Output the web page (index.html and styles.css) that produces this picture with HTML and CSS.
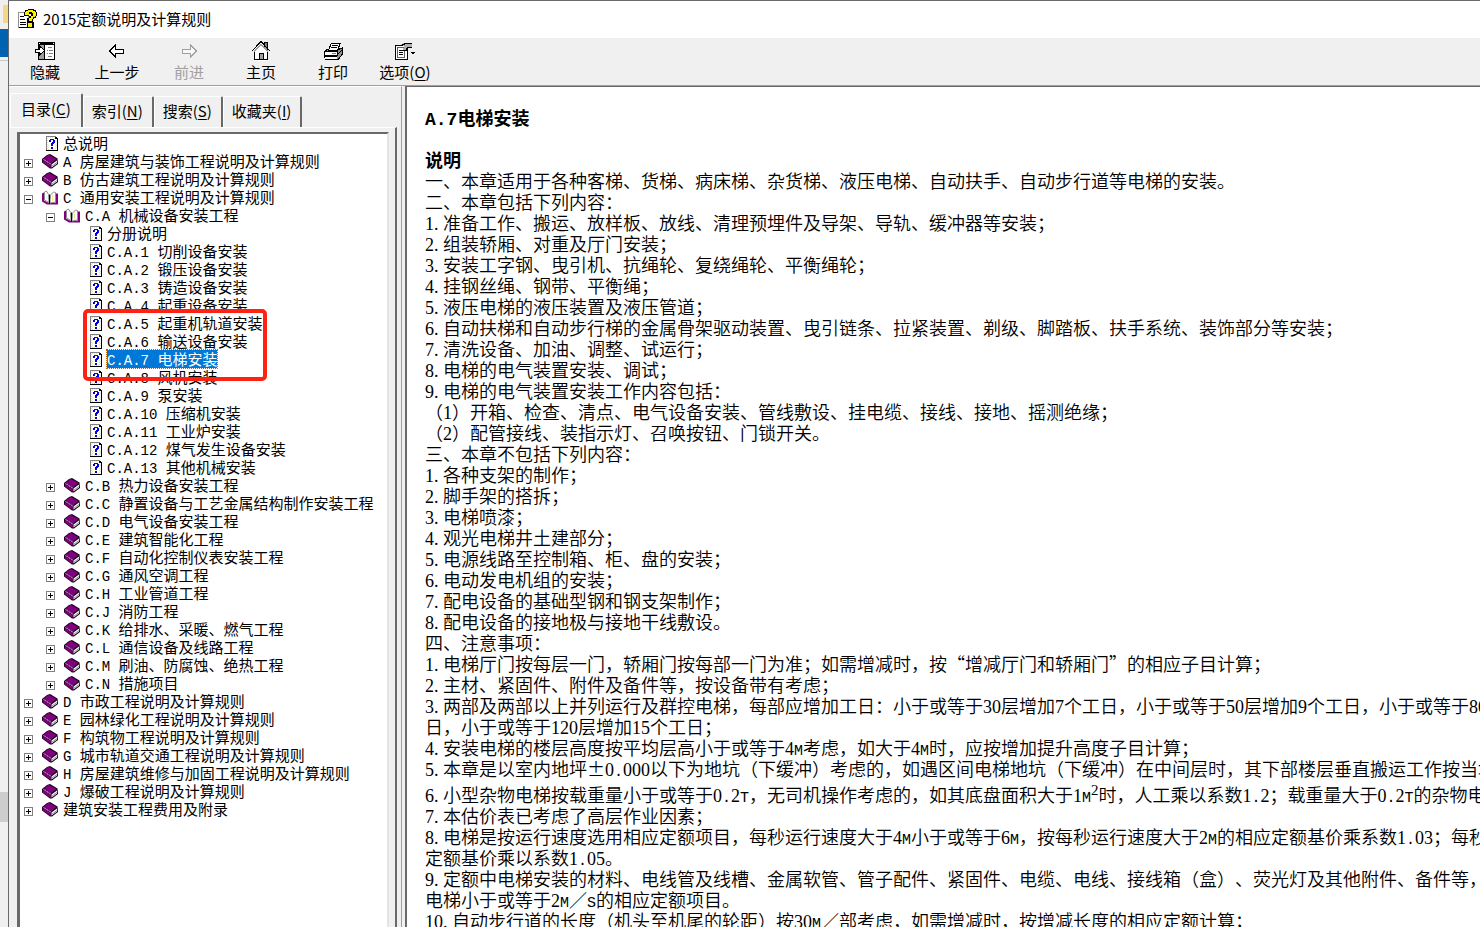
FILE: index.html
```
<!DOCTYPE html>
<html lang="zh-CN">
<head>
<meta charset="utf-8">
<title>2015定额说明及计算规则</title>
<link rel="stylesheet" href="styles.css">
</head>
<body>
<svg class="defs" width="0" height="0" aria-hidden="true">
  <symbol id="i-book" viewBox="0 0 16 15">
    <path d="M5 1L8 0L15.500 4.500L16 10L10 14.500L8 14.500L0 8.500L0 5z" fill="#1a001a"/>
    <path d="M6.500 .8L14.500 5L9 9.500L1.500 5z" fill="#800080"/>
    <path d="M.8 6L8.800 11L8.800 14L.8 8.500z" fill="#800080"/>
    <path d="M1.500 5.500L9 10.200" fill="none" stroke="#e8c8e8" stroke-dasharray="1.500 .5"/>
    <path d="M9.500 10.500L15 6.500L15 9.500L9.500 13.500z" fill="#fff"/>
    <path d="M10 12L15 8.500" fill="none" stroke="#909090"/>
  </symbol>
  <symbol id="i-open" viewBox="0 0 16 14">
    <path d="M0 3L2 2L2 10L6 12L14 12L14 3L16 3L16 14L5 14L0 11z" fill="#800080"/>
    <path d="M2.500 1.500L4.500 .5L6.500 4L7 12L2.500 9.500z" fill="#fff" stroke="#909090"/>
    <path d="M8.500 4.500L11.500 1.500L13.500 2L13.500 11.500L8 12.500z" fill="#fff" stroke="#909090"/>
    <path d="M7.500 4v9" stroke="#000"/>
    <path d="M10.500 4v7" stroke="#f0e890"/>
  </symbol>
  <symbol id="i-page" viewBox="0 0 12 15">
    <path d="M0 0h10v1h1v1h1v13h-12z" fill="#000"/>
    <path d="M0 0h10v1h-9v13h-1z" fill="#808080"/>
    <path d="M1 1h8v2h2v11h-10z" fill="#fffff0"/>
    <path d="M1 2h1v1h-1zM1 4h1v1h-1zM1 6h1v1h-1zM1 8h1v1h-1zM1 10h1v1h-1zM1 12h1v1h-1zM2 1h1v1h-1zM4 1h1v1h-1zM6 1h1v1h-1zM9 4h1v1h-1zM10 5h1v1h-1zM9 8h1v1h-1zM10 9h1v1h-1zM9 10h1v1h-1zM10 11h1v1h-1zM9 12h1v1h-1zM2 9h1v1h-1zM2 11h1v1h-1zM2 13h1v1h-1zM4 13h1v1h-1zM6 13h1v1h-1zM8 13h1v1h-1z" fill="#fff040"/>
    <path d="M4 3h4v1h1v3h-1v1h-1v2h-2v-3h1v-1h1v-2h-2v2h-2v-2h1zM5 11h2v2h-2z" fill="#0000e0"/>
  </symbol>
  <symbol id="i-plus" viewBox="0 0 9 9"><path d="M.5.5h8v8h-8z" fill="#fff" stroke="#808080"/><path d="M2 4.500h5M4.500 2v5" stroke="#000"/></symbol>
  <symbol id="i-minus" viewBox="0 0 9 9"><path d="M.5.5h8v8h-8z" fill="#fff" stroke="#808080"/><path d="M2 4.500h5" stroke="#000"/></symbol>
</svg>

<div class="screen">
  <div class="behind" aria-hidden="true"><i class="folder"></i><i class="blue"></i><i class="rule"></i><i class="thumb"></i></div>
  <div class="window">
    <header class="title">
      <svg width="20" height="20" viewBox="0 0 20 20" shape-rendering="crispEdges">
        <path d="M1.500 3.500h10v15h-10z" fill="#fff" stroke="#909090"/><path d="M2 18.500h11V9" fill="none" stroke="#000"/>
        <path d="M3 7.500h4M3 10.500h5M3 13.500h6M3 15.500h6" stroke="#000"/>
        <path d="M7 3h1V1h3V0h6v1h2v2h1v4h-1v2h-2v1h-1v3h-6V9h2V7h2V5h-2v2H7zM10 13h7v6h-7z" fill="#000"/>
        <path d="M8 3h1V2h2V1h5v1h2v1h1v4h-1v1h-2v2h-1v2h-3V9h2V7h2V4h-1V3h-3v3H8zM11 14h4v4h-4z" fill="#ffee00"/>
      </svg>
      <span>2015定额说明及计算规则</span>
    </header>
    <nav class="toolbar">
      <button type="button"><svg width="20" height="19" viewBox="0 0 20 19" shape-rendering="crispEdges"><path d="M3 0h17v18H3z" fill="#000"/><path d="M4 3h5v14H4z" fill="#a0a0a0"/><path d="M4 1h1v1h-1zM18 1h1v1h-1zM10 3h9v14h-9z" fill="#fff"/><path d="M13 5.500h4M12 8.500h1M14 8.500h4M12 11.500h1M14 11.500h4M13 14.500h4" stroke="#808080"/><path d="M.5 7.500h4v-3l5 4.500-5 4.500v-3h-4z" fill="#fff" stroke="#000"/></svg><span>隐藏</span></button>
      <button type="button"><svg width="20" height="19" viewBox="0 0 20 19" shape-rendering="crispEdges"><path d="M2.500 9.500l6-6v4h8v4h-8v4z" fill="#fff" stroke="#000"/></svg><span>上一步</span></button>
      <button type="button" disabled><svg width="20" height="19" viewBox="0 0 20 19" shape-rendering="crispEdges"><path d="M17.500 9.500l-6-6v4h-8v4h8v4z" fill="#f8f8f8" stroke="#a0a0a0"/></svg><span>前进</span></button>
      <button type="button"><svg width="20" height="20" viewBox="0 0 20 20" shape-rendering="crispEdges"><path d="M13.500 1.500h3v8h-3z" fill="#808080" stroke="#000"/><path d="M3.500 10v9.500h13V10l-6-7z" fill="#fff"/><path d="M3.500 10v8.500h13V10M.5 10.500l9.500-10 9.500 10" fill="none" stroke="#000"/><path d="M3 10.500l7-7 7 7" fill="none" stroke="#a0a0a0"/><path d="M8.500 12.500h4v6h-4z" fill="#a0a0a0" stroke="#000"/></svg><span>主页</span></button>
      <button type="button"><svg width="20" height="19" viewBox="0 0 20 19" shape-rendering="crispEdges"><path d="M1.500 10.500l3-3h12l3-1v6l-4 5h-13l-1-2z" fill="#909090" stroke="#000"/><path d="M1.500 9.500h13v4h-13z" fill="#fff" stroke="#000"/><path d="M2 14h12v3h-12z" fill="#fff"/><path d="M5.500 8.500l3-7h9l-3 7z" fill="#fff" stroke="#000"/><path d="M9 3.500h6M8 5.500h6M15 12.500l4-4M2 14.500h12M2 17.500h13" stroke="#000"/><path d="M9 11.500h4" stroke="#808080"/></svg><span>打印</span></button>
      <button type="button"><svg width="22" height="19" viewBox="0 0 22 19" shape-rendering="crispEdges"><path d="M1.500 3.500h12v14h-12z" fill="#fff" stroke="#000"/><path d="M3.500 5.500h7v10h-7z" fill="#fff" stroke="#606060"/><path d="M5 8.500h4M5 10.500h4M5 12.500h4" stroke="#000"/><path d="M7 3l3-2h8v4h-4l-3 4-2-1 1-3z" fill="#b0b0b0"/><path d="M8 2.500h2v-1h8M18 5.500h-4M13 6.500h-1v2h-3" fill="none" stroke="#000"/><path d="M16 10h6l-3 3z" fill="#000"/></svg><span>选项(<u>O</u>)</span></button>
    </nav>
    <main class="panes">
      <section class="side">
        <div class="tabs" role="tablist">
          <button type="button" class="active" role="tab" aria-selected="true">目录(<u>C</u>)</button>
          <button type="button" role="tab">索引(<u>N</u>)</button>
          <button type="button" role="tab">搜索(<u>S</u>)</button>
          <button type="button" role="tab">收藏夹(<u>I</u>)</button>
        </div>
        <div class="tabpage">
          <div class="tree">
            <ul>
              <li><a href="#"><svg class="pg"><use href="#i-page"/></svg><span>总说明</span></a></li>
              <li><a href="#"><svg class="ex"><use href="#i-plus"/></svg><svg class="bk"><use href="#i-book"/></svg><span><b>A </b>房屋建筑与装饰工程说明及计算规则</span></a></li>
              <li><a href="#"><svg class="ex"><use href="#i-plus"/></svg><svg class="bk"><use href="#i-book"/></svg><span><b>B </b>仿古建筑工程说明及计算规则</span></a></li>
              <li><a href="#"><svg class="ex"><use href="#i-minus"/></svg><svg class="bk"><use href="#i-open"/></svg><span><b>C </b>通用安装工程说明及计算规则</span></a>
                <ul>
                  <li><a href="#"><svg class="ex"><use href="#i-minus"/></svg><svg class="bk"><use href="#i-open"/></svg><span><b>C.A </b>机械设备安装工程</span></a>
                    <ul class="marked">
                      <li><a href="#"><svg class="pg"><use href="#i-page"/></svg><span>分册说明</span></a></li>
                      <li><a href="#"><svg class="pg"><use href="#i-page"/></svg><span><b>C.A.1 </b>切削设备安装</span></a></li>
                      <li><a href="#"><svg class="pg"><use href="#i-page"/></svg><span><b>C.A.2 </b>锻压设备安装</span></a></li>
                      <li><a href="#"><svg class="pg"><use href="#i-page"/></svg><span><b>C.A.3 </b>铸造设备安装</span></a></li>
                      <li><a href="#"><svg class="pg"><use href="#i-page"/></svg><span><b>C.A.4 </b>起重设备安装</span></a></li>
                      <li><a href="#"><svg class="pg"><use href="#i-page"/></svg><span><b>C.A.5 </b>起重机轨道安装</span></a></li>
                      <li><a href="#"><svg class="pg"><use href="#i-page"/></svg><span><b>C.A.6 </b>输送设备安装</span></a></li>
                      <li><a href="#"><svg class="pg"><use href="#i-page"/></svg><span class="selected"><b>C.A.7 </b>电梯安装</span></a></li>
                      <li><a href="#"><svg class="pg"><use href="#i-page"/></svg><span><b>C.A.8 </b>风机安装</span></a></li>
                      <li><a href="#"><svg class="pg"><use href="#i-page"/></svg><span><b>C.A.9 </b>泵安装</span></a></li>
                      <li><a href="#"><svg class="pg"><use href="#i-page"/></svg><span><b>C.A.10 </b>压缩机安装</span></a></li>
                      <li><a href="#"><svg class="pg"><use href="#i-page"/></svg><span><b>C.A.11 </b>工业炉安装</span></a></li>
                      <li><a href="#"><svg class="pg"><use href="#i-page"/></svg><span><b>C.A.12 </b>煤气发生设备安装</span></a></li>
                      <li><a href="#"><svg class="pg"><use href="#i-page"/></svg><span><b>C.A.13 </b>其他机械安装</span></a></li>
                    </ul>
                  </li>
                  <li><a href="#"><svg class="ex"><use href="#i-plus"/></svg><svg class="bk"><use href="#i-book"/></svg><span><b>C.B </b>热力设备安装工程</span></a></li>
                  <li><a href="#"><svg class="ex"><use href="#i-plus"/></svg><svg class="bk"><use href="#i-book"/></svg><span><b>C.C </b>静置设备与工艺金属结构制作安装工程</span></a></li>
                  <li><a href="#"><svg class="ex"><use href="#i-plus"/></svg><svg class="bk"><use href="#i-book"/></svg><span><b>C.D </b>电气设备安装工程</span></a></li>
                  <li><a href="#"><svg class="ex"><use href="#i-plus"/></svg><svg class="bk"><use href="#i-book"/></svg><span><b>C.E </b>建筑智能化工程</span></a></li>
                  <li><a href="#"><svg class="ex"><use href="#i-plus"/></svg><svg class="bk"><use href="#i-book"/></svg><span><b>C.F </b>自动化控制仪表安装工程</span></a></li>
                  <li><a href="#"><svg class="ex"><use href="#i-plus"/></svg><svg class="bk"><use href="#i-book"/></svg><span><b>C.G </b>通风空调工程</span></a></li>
                  <li><a href="#"><svg class="ex"><use href="#i-plus"/></svg><svg class="bk"><use href="#i-book"/></svg><span><b>C.H </b>工业管道工程</span></a></li>
                  <li><a href="#"><svg class="ex"><use href="#i-plus"/></svg><svg class="bk"><use href="#i-book"/></svg><span><b>C.J </b>消防工程</span></a></li>
                  <li><a href="#"><svg class="ex"><use href="#i-plus"/></svg><svg class="bk"><use href="#i-book"/></svg><span><b>C.K </b>给排水、采暖、燃气工程</span></a></li>
                  <li><a href="#"><svg class="ex"><use href="#i-plus"/></svg><svg class="bk"><use href="#i-book"/></svg><span><b>C.L </b>通信设备及线路工程</span></a></li>
                  <li><a href="#"><svg class="ex"><use href="#i-plus"/></svg><svg class="bk"><use href="#i-book"/></svg><span><b>C.M </b>刷油、防腐蚀、绝热工程</span></a></li>
                  <li><a href="#"><svg class="ex"><use href="#i-plus"/></svg><svg class="bk"><use href="#i-book"/></svg><span><b>C.N </b>措施项目</span></a></li>
                </ul>
              </li>
              <li><a href="#"><svg class="ex"><use href="#i-plus"/></svg><svg class="bk"><use href="#i-book"/></svg><span><b>D </b>市政工程说明及计算规则</span></a></li>
              <li><a href="#"><svg class="ex"><use href="#i-plus"/></svg><svg class="bk"><use href="#i-book"/></svg><span><b>E </b>园林绿化工程说明及计算规则</span></a></li>
              <li><a href="#"><svg class="ex"><use href="#i-plus"/></svg><svg class="bk"><use href="#i-book"/></svg><span><b>F </b>构筑物工程说明及计算规则</span></a></li>
              <li><a href="#"><svg class="ex"><use href="#i-plus"/></svg><svg class="bk"><use href="#i-book"/></svg><span><b>G </b>城市轨道交通工程说明及计算规则</span></a></li>
              <li><a href="#"><svg class="ex"><use href="#i-plus"/></svg><svg class="bk"><use href="#i-book"/></svg><span><b>H </b>房屋建筑维修与加固工程说明及计算规则</span></a></li>
              <li><a href="#"><svg class="ex"><use href="#i-plus"/></svg><svg class="bk"><use href="#i-book"/></svg><span><b>J </b>爆破工程说明及计算规则</span></a></li>
              <li><a href="#"><svg class="ex"><use href="#i-plus"/></svg><svg class="bk"><use href="#i-book"/></svg><span>建筑安装工程费用及附录</span></a></li>
            </ul>
          </div>
        </div>
      </section>
      <article class="doc">
        <h1><i>A.7</i>电梯安装</h1>
        <h2>说明</h2>
        <p>一、本章适用于各种客梯、货梯、病床梯、杂货梯、液压电梯、自动扶手、自动步行道等电梯的安装。</p>
        <p>二、本章包括下列内容：</p>
        <p><b>1. </b>准备工作、搬运、放样板、放线、清理预埋件及导架、导轨、缓冲器等安装；</p>
        <p><b>2. </b>组装轿厢、对重及厅门安装；</p>
        <p><b>3. </b>安装工字钢、曳引机、抗绳轮、复绕绳轮、平衡绳轮；</p>
        <p><b>4. </b>挂钢丝绳、钢带、平衡绳；</p>
        <p><b>5. </b>液压电梯的液压装置及液压管道；</p>
        <p><b>6. </b>自动扶梯和自动步行梯的金属骨架驱动装置、曳引链条、拉紧装置、剃级、脚踏板、扶手系统、装饰部分等安装；</p>
        <p><b>7. </b>清洗设备、加油、调整、试运行；</p>
        <p><b>8. </b>电梯的电气装置安装、调试；</p>
        <p><b>9. </b>电梯的电气装置安装工作内容包括：</p>
        <p>（<b>1</b>）开箱、检查、清点、电气设备安装、管线敷设、挂电缆、接线、接地、摇测绝缘；</p>
        <p>（<b>2</b>）配管接线、装指示灯、召唤按钮、门锁开关。</p>
        <p>三、本章不包括下列内容：</p>
        <p><b>1. </b>各种支架的制作；</p>
        <p><b>2. </b>脚手架的搭拆；</p>
        <p><b>3. </b>电梯喷漆；</p>
        <p><b>4. </b>观光电梯井土建部分；</p>
        <p><b>5. </b>电源线路至控制箱、柜、盘的安装；</p>
        <p><b>6. </b>电动发电机组的安装；</p>
        <p><b>7. </b>配电设备的基础型钢和钢支架制作；</p>
        <p><b>8. </b>配电设备的接地极与接地干线敷设。</p>
        <p>四、注意事项：</p>
        <p><b>1. </b>电梯厅门按每层一门，轿厢门按每部一门为准；如需增减时，按“增减厅门和轿厢门”的相应子目计算；</p>
        <p><b>2. </b>主材、紧固件、附件及备件等，按设备带有考虑；</p>
        <p><b>3. </b>两部及两部以上并列运行及群控电梯，每部应增加工日：小于或等于<b>30</b>层增加<b>7</b>个工日，小于或等于<b>50</b>层增加<b>9</b>个工日，小于或等于<b>80</b><br>日，小于或等于<b>120</b>层增加<b>15</b>个工日；</p>
        <p><b>4. </b>安装电梯的楼层高度按平均层高小于或等于<b>4<i>M</i></b>考虑，如大于<b>4<i>M</i></b>时，应按增加提升高度子目计算；</p>
        <p><b>5. </b>本章是以室内地坪±<b>0<i>.</i>000</b>以下为地坑（下缓冲）考虑的，如遇区间电梯地坑（下缓冲）在中间层时，其下部楼层垂直搬运工作按当地</p>
        <p class="raised"><b>6. </b>小型杂物电梯按载重量小于或等于<b>0<i>.</i>2<i>T</i></b>，无司机操作考虑的，如其底盘面积大于<b>1<i>M</i><sup>2</sup></b>时，人工乘以系数<b>1<i>.</i>2</b>；载重量大于<b>0<i>.</i>2<i>T</i></b>的杂物电</p>
        <p><b>7. </b>本估价表已考虑了高层作业因素；</p>
        <p><b>8. </b>电梯是按运行速度选用相应定额项目，每秒运行速度大于<b>4<i>M</i></b>小于或等于<b>6<i>M</i></b>，按每秒运行速度大于<b>2<i>M</i></b>的相应定额基价乘系数<b>1<i>.</i>03</b>；每秒<br>定额基价乘以系数<b>1<i>.</i>05</b>。</p>
        <p><b>9. </b>定额中电梯安装的材料、电线管及线槽、金属软管、管子配件、紧固件、电缆、电线、接线箱（盒）、荧光灯及其他附件、备件等，<br>电梯小于或等于<b>2<i>M</i></b>／<i>S</i>的相应定额项目。</p>
        <p><b>10. </b>自动步行道的长度（机头至机尾的轮距）按<b>30<i>M</i></b>／部考虑，如需增减时，按增减长度的相应定额计算；</p>
      </article>
    </main>
  </div>
</div>
</body>
</html>
```
FILE: styles.css
```
*, *::after { box-sizing: border-box; }
html, body { height: 100%; }
body {
  margin: 0;
  overflow: hidden;
  font: 15px/18px "Noto Sans CJK SC", sans-serif;
  color: #000;
  text-spacing-trim: space-all;
}
button { font: inherit; color: inherit; background: none; border: 0; padding: 0; }
a { color: inherit; text-decoration: none; }
ul { list-style: none; margin: 0; padding: 0; }
.defs { display: block; height: 0; }

.screen { display: flex; height: 100vh; overflow: hidden; }
.behind { width: 8px; flex: none; display: flex; flex-direction: column; background: #f0f0f0; }
.behind i { flex: none; }
.folder { height: 18px; margin: 5px 0 6px 3px; background: #f3d88b; }
.blue { height: 28px; background: #0063b1; }
.rule { height: 1px; margin-top: 3px; background: #c8c8c8; }
.thumb { height: 30px; margin-top: 731px; background: #cdcdcd; }

.window {
  flex: 1;
  min-width: 0;
  display: flex;
  flex-direction: column;
  background: #f0f0f0;
  border: solid #6a6a6a;
  border-width: 1px 0 0 1px;
}
.title {
  flex: none;
  height: 37px;
  display: flex;
  align-items: center;
  gap: 6px;
  padding: 0 0 2px 8px;
  background: #fff;
}
.toolbar { flex: none; display: flex; height: 48px; border-bottom: 1px solid #a0a0a0; }
.toolbar button {
  width: 72px;
  display: flex;
  flex-direction: column;
  align-items: center;
  gap: 2px;
  padding-top: 3px;
}
.toolbar svg { height: 20px; }
.toolbar button:disabled { color: #a0a0a0; }
u { text-underline-offset: 2px; }

.panes { flex: 1; min-height: 0; display: flex; }
.side {
  flex: none;
  width: 393px;
  margin-right: 3px;
  padding: 6px 4px 0 1px;
  display: flex;
  flex-direction: column;
  border: solid;
  border-width: 1px 1px 0 0;
  border-color: #fff #a0a0a0;
}
.tabs { flex: none; display: flex; align-items: flex-end; height: 34px; }
.tabs button {
  height: 31px;
  padding: 0 9px 2px 8px;
  border: solid;
  border-width: 1px 2px 0 1px;
  border-color: #fff #696969 #fff #fff;
  border-radius: 2px 2px 0 0;
}
.tabs .active { height: 34px; padding: 0 10px 4px; }
.tabpage {
  flex: 1;
  min-height: 0;
  padding: 4px 6px 0 7px;
  border: solid;
  border-width: 1px 2px 0 0;
  border-color: #fff #696969;
  display: flex;
}
.tree {
  flex: 1;
  min-width: 0;
  overflow: hidden;
  background: #fff;
  border: solid;
  border-width: 2px 2px 0 3px;
  border-color: #696969 #e3e3e3 #fff #696969;
}
.tree a { display: flex; align-items: center; height: 18px; padding-left: 4px; white-space: nowrap; }
.tree svg { flex: none; shape-rendering: crispEdges; }
.tree ul ul { padding-left: 22px; }
.tree b { font: 14px/1 "Liberation Mono", monospace; white-space: pre; }
.tree svg.ex { width: 9px; height: 9px; margin: 5px 9px 0 0; }
.tree svg.bk { width: 16px; height: 15px; margin-right: 5px; shape-rendering: auto; }
.tree svg.pg { width: 12px; height: 15px; margin: 0 5px 0 22px; }
.selected { color: #fff; background: #0078d7; outline: 1px dotted #c86400; }
.marked { position: relative; }
.marked::after {
  content: "";
  position: absolute;
  left: 41px;
  top: 85px;
  width: 184px;
  height: 72px;
  border: 4px solid #ff2212;
  border-radius: 5px;
}

.doc {
  flex: 1;
  min-width: 0;
  overflow: hidden;
  padding: 20px 0 0 18px;
  background: #fff;
  border: solid #696969;
  border-width: 1px 0 0 2px;
  font-size: 18px;
  font-weight: 350;
  line-height: 21px;
  white-space: nowrap;
}
.doc h1, .doc h2, .doc p { margin: 0; font-size: 18px; line-height: 21px; }
.doc h1 { margin-bottom: 21px; }
.doc b { font: 18px/15px "Liberation Serif", serif; white-space: pre; }
.doc i { font: 15px/12px "Liberation Mono", monospace; }
.doc h1 i { font-size: 18px; font-weight: 700; }
.doc .raised { padding-top: 5px; }
.doc sup { font-size: 15px; line-height: 0; }
```
